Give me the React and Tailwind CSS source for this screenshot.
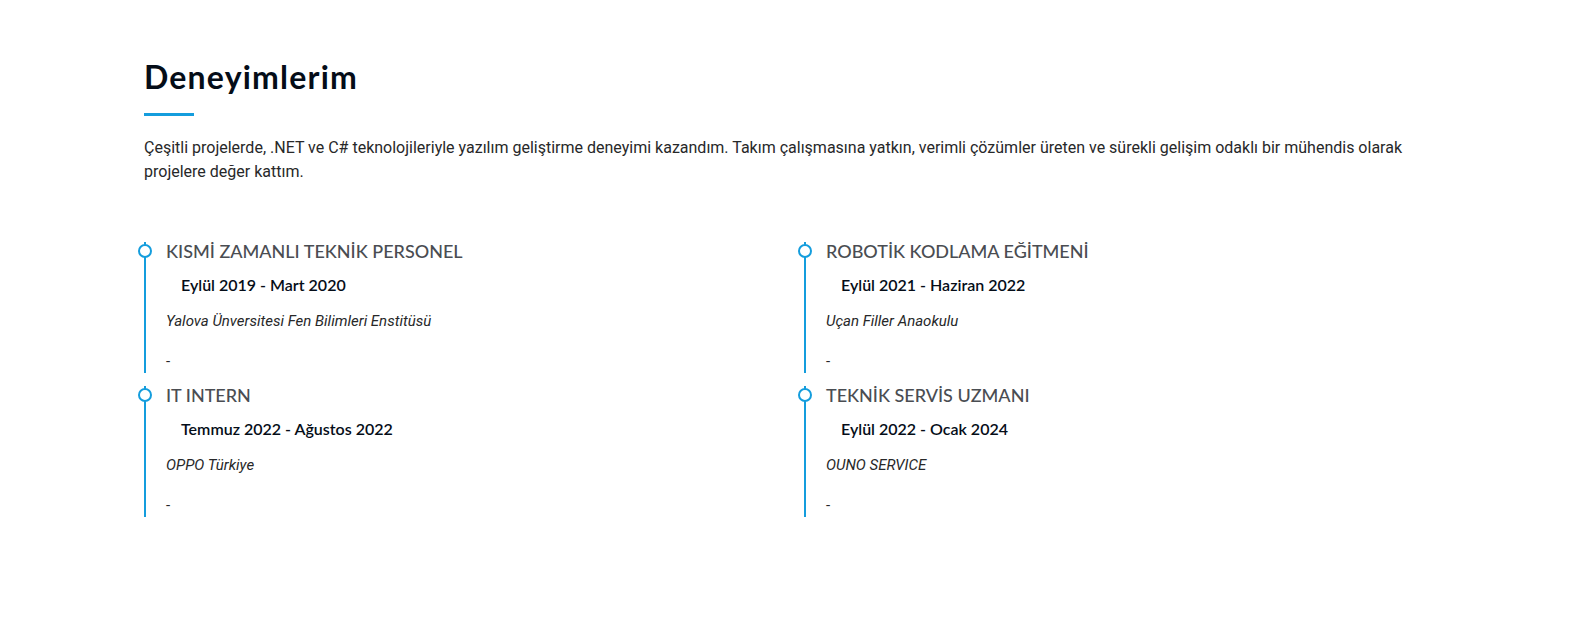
import React from 'react';

const heading = { fontFamily: 'Lato, "Open Sans", sans-serif' };

// --- experience entries, left column then right column ---
const columns = [
  [
    { title: 'KISMİ ZAMANLI TEKNİK PERSONEL', date: 'Eylül 2019 - Mart 2020', place: 'Yalova Ünversitesi Fen Bilimleri Enstitüsü' },
    { title: 'IT INTERN', date: 'Temmuz 2022 - Ağustos 2022', place: 'OPPO Türkiye' },
  ],
  [
    { title: 'ROBOTİK KODLAMA EĞİTMENİ', date: 'Eylül 2021 - Haziran 2022', place: 'Uçan Filler Anaokulu' },
    { title: 'TEKNİK SERVİS UZMANI', date: 'Eylül 2022 - Ocak 2024', place: 'OUNO SERVICE' },
  ],
];

const ResumeItem = ({ item, first }) => (
  <div className={`relative border-l-2 border-[#149ddd] pl-5 ${first ? '' : 'mt-[13px]'}`}>
    <span className="absolute left-[-8px] top-[2px] w-[14px] h-[14px] rounded-full border-2 border-[#149ddd] bg-white" />
    <h4 style={heading} className="text-[18px] leading-[18px] font-medium text-[#4a4d52] uppercase mb-[10px]">
      {item.title}
    </h4>
    <h5 style={heading} className="inline-block px-[15px] py-[5px] text-[16px] leading-[19px] font-semibold text-[#050d18] mb-[10px]">
      {item.date}
    </h5>
    <p className="italic text-[15px] leading-6 text-[#272829] mb-4">{item.place}</p>
    <p className="text-[15px] leading-6 text-[#272829]">-</p>
  </div>
);

export default function App() {
  return (
    <div className="min-h-[631px] w-full bg-white" style={{ fontFamily: 'Roboto, "Liberation Sans", sans-serif' }}>
      <section className="max-w-[1320px] mx-auto px-3 pt-[58px]">
        <div className="mb-5">
          <h2 style={heading} className="relative text-[32px] leading-[38px] font-bold tracking-[1.2px] text-[#050d18] pb-5">
            Deneyimlerim
            <span className="absolute left-0 bottom-0 w-[50px] h-[3px] bg-[#149ddd]" />
          </h2>
        </div>
        <p className="text-[16px] leading-6 text-[#272829]">
          Çeşitli projelerde, .NET ve C# teknolojileriyle yazılım geliştirme deneyimi kazandım. Takım çalışmasına yatkın, verimli çözümler üreten ve sürekli gelişim odaklı bir mühendis olarak projelere değer kattım.
        </p>

        <div className="grid grid-cols-2 gap-x-6 mt-[58px]">
          {columns.map((col, ci) => (
            <div key={ci}>
              {col.map((item, i) => (
                <ResumeItem key={item.title} item={item} first={i === 0} />
              ))}
            </div>
          ))}
        </div>
      </section>
    </div>
  );
}
